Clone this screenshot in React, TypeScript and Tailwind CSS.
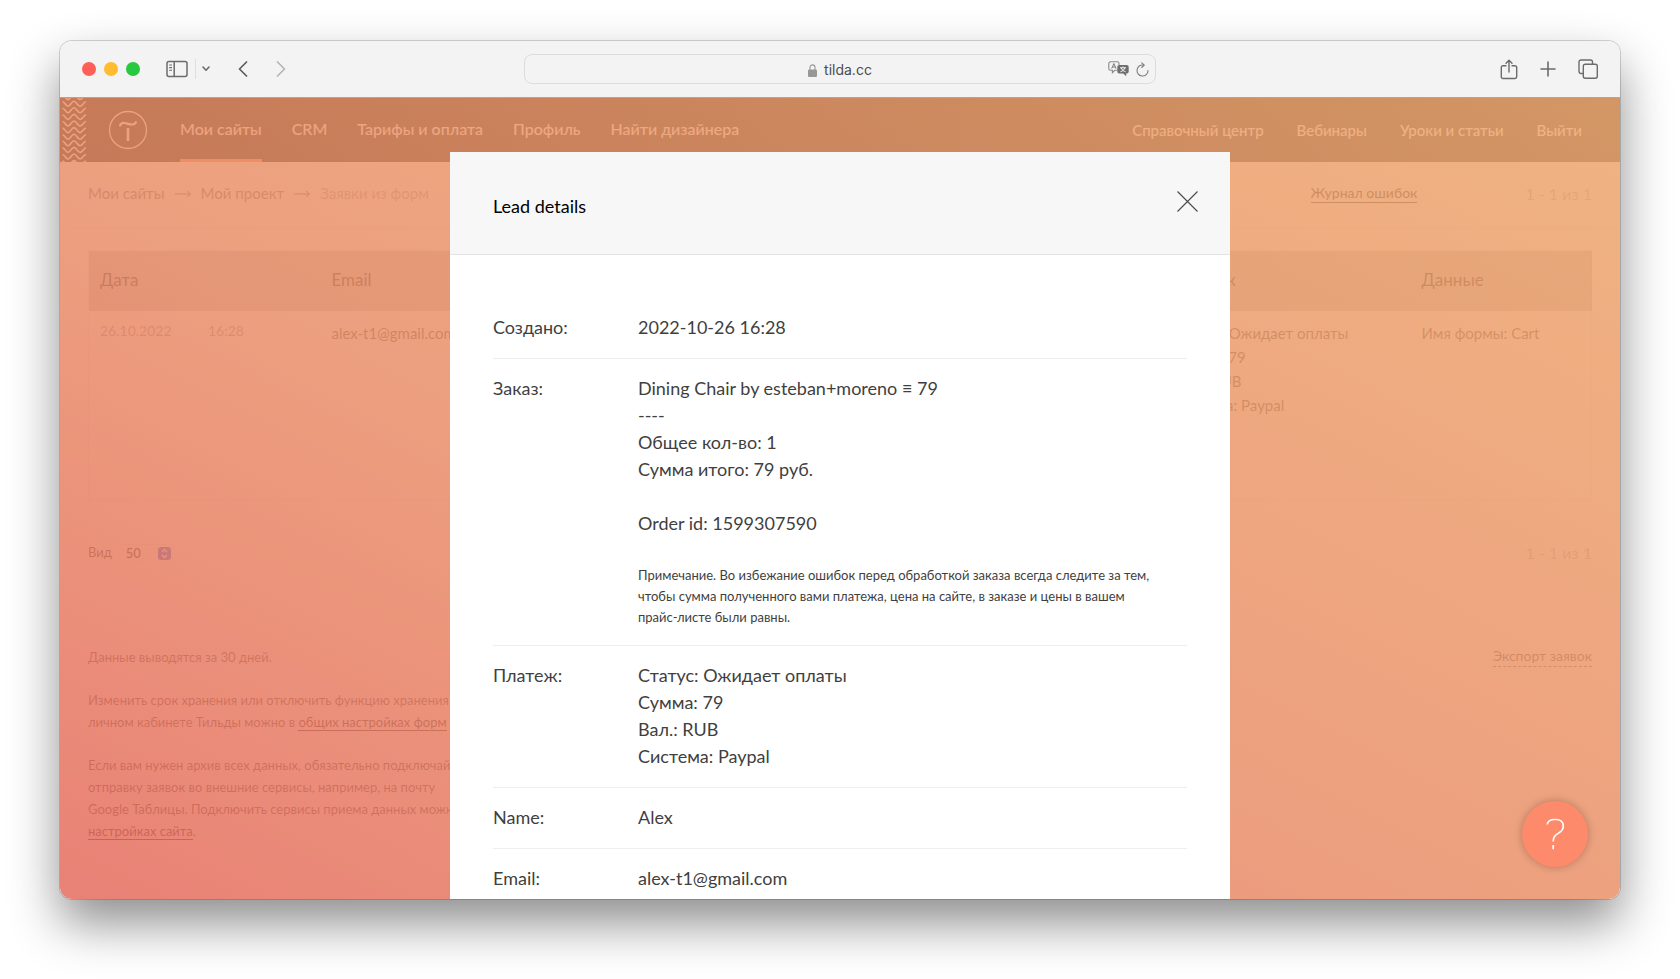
import type { ReactNode } from 'react';

const mainNav = ['Мои сайты', 'CRM', 'Тарифы и оплата', 'Профиль', 'Найти дизайнера'];
const sideNav = ['Справочный центр', 'Вебинары', 'Уроки и статьи', 'Выйти'];

// tops of the wavy lines on the left of the header
const waves = [-3.4, 3.2, 9.8, 16.4, 23, 29.6, 36.2, 42.8, 49.4, 56, 62.6];

function Toolbar() {
  return (
    <div className="grid h-[57px] shrink-0 grid-cols-[1fr_632px_1fr] items-center border-b border-[#b9a399] bg-[#f3f3f3] text-[#6b6b6b]">
      <div className="flex items-center pl-[22px]">
        <div className="flex gap-2">
          <span className="size-[14px] rounded-full bg-[#ff5f57]" />
          <span className="size-[14px] rounded-full bg-[#febc2e]" />
          <span className="size-[14px] rounded-full bg-[#28c840]" />
        </div>
        <button aria-label="Sidebar" className="ml-[26px]">
          <svg width="22" height="18" viewBox="0 0 22 18" fill="none" stroke="currentColor" strokeWidth="1.5">
            <rect x="1" y="1.5" width="20" height="15" rx="2" />
            <path d="M8.2 1.5v15" />
            <path d="M3.2 5h2.8M3.2 7.6h2.8M3.2 10.2h2.8" strokeWidth="1.1" />
          </svg>
        </button>
        <span className="ml-[7px] h-5 w-px bg-[#dedede]" />
        <button aria-label="Tab groups" className="ml-[6px]">
          <svg width="8" height="6" viewBox="0 0 8 6" fill="none" stroke="currentColor" strokeWidth="1.6" strokeLinecap="round" strokeLinejoin="round">
            <path d="M1 1l3 3.2L7 1" />
          </svg>
        </button>
        <button aria-label="Back" className="ml-7">
          <svg width="10" height="16" viewBox="0 0 10 16" fill="none" stroke="#5c5c5c" strokeWidth="1.7" strokeLinecap="round" strokeLinejoin="round">
            <path d="M8.5 1L1.5 8l7 7" />
          </svg>
        </button>
        <button aria-label="Forward" className="ml-7">
          <svg width="10" height="16" viewBox="0 0 10 16" fill="none" stroke="#b5b5b5" strokeWidth="1.7" strokeLinecap="round" strokeLinejoin="round">
            <path d="M1.5 1l7 7-7 7" />
          </svg>
        </button>
      </div>

      <div className="grid h-[30px] grid-cols-[1fr_auto_1fr] items-center rounded-lg border border-[#dcdcdc] bg-[#f3f3f3]">
        <span />
        <div className="flex items-center gap-[7px] pt-[2px] text-sm text-[#4c4c4c] font-['Inter','Liberation_Sans',sans-serif]">
          <svg width="9" height="13" viewBox="0 0 9 13">
            <rect y="5.5" width="9" height="7.5" rx="1.2" fill="#979797" />
            <path d="M2 6V3.4a2.5 2.5 0 0 1 5 0V6" fill="none" stroke="#979797" strokeWidth="1.1" />
          </svg>
          tilda.cc
        </div>
        <div className="flex items-center justify-end gap-[7px] pr-[6px]">
          <button aria-label="Translate">
            <svg width="21" height="16" viewBox="0 0 21 16" fill="none">
              <path d="M9 9.3H6.8L4.4 11.6V9.3H2.4A1.6 1.6 0 0 1 .8 7.7V2.4A1.6 1.6 0 0 1 2.4.8h7A1.6 1.6 0 0 1 11 2.4V4" stroke="#8a8a8a" strokeWidth="1.1" />
              <path d="M3.7 7.6L5.9 2.5l2.1 5.1M4.5 6h2.8" stroke="#7d7d7d" strokeWidth="1" />
              <path d="M11.2 4h7.6A1.9 1.9 0 0 1 20.7 5.9v4.6a1.9 1.9 0 0 1-1.9 1.9h-.6v2.8l-3-2.8h-4a1.9 1.9 0 0 1-1.9-1.9V5.9A1.9 1.9 0 0 1 11.2 4z" fill="#6e6e6e" />
              <path d="M12 6.8h6M15 5.6v1.2M17 6.8c-.6 1.8-2.3 3.2-4.6 4M13.2 6.8c.6 1.8 2 3.2 4.4 4" stroke="#f3f3f3" strokeWidth="1" />
            </svg>
          </button>
          <button aria-label="Reload">
            <svg width="13" height="15" viewBox="0 0 13 15" fill="none" stroke="#7d7d7d" strokeWidth="1.1" strokeLinecap="round" strokeLinejoin="round">
              <path d="M12 8.5A5.5 5.5 0 1 1 8 3.2" />
              <path d="M5.8.8L8.2 3.2 5.8 5.5" />
            </svg>
          </button>
        </div>
      </div>

      <div className="flex items-center justify-end gap-[22px] pr-[22px]">
        <button aria-label="Share">
          <svg width="18" height="21" viewBox="0 0 18 21" fill="none" stroke="currentColor" strokeWidth="1.4" strokeLinecap="round" strokeLinejoin="round">
            <path d="M6 6.7H3A1.7 1.7 0 0 0 1.3 8.4v9.4A1.7 1.7 0 0 0 3 19.5h12a1.7 1.7 0 0 0 1.7-1.7V8.4A1.7 1.7 0 0 0 15 6.7h-3" />
            <path d="M9 13V1.5M6 4.2l3-3 3 3" />
          </svg>
        </button>
        <button aria-label="New tab">
          <svg width="16" height="16" viewBox="0 0 16 16" fill="none" stroke="currentColor" strokeWidth="1.6" strokeLinecap="round">
            <path d="M8 1v14M1 8h14" />
          </svg>
        </button>
        <button aria-label="Tabs">
          <svg width="20" height="20" viewBox="0 0 20 20" fill="none" stroke="currentColor" strokeWidth="1.4">
            <rect x="5.3" y="5.3" width="14" height="14" rx="2" />
            <path d="M5.3 14.5H3a2 2 0 0 1-2-2V3a2 2 0 0 1 2-2h9.5a2 2 0 0 1 2 2v2.3" />
          </svg>
        </button>
      </div>
    </div>
  );
}

function SiteHeader() {
  return (
    <header className="flex h-16 items-center bg-linear-to-r from-[#0c0c0c] to-[#4a4a4a] font-medium text-white">
      <svg width="26" height="64" className="shrink-0" fill="none" stroke="white" strokeWidth="1.6">
        {waves.map((y) => (
          <path key={y} transform={`translate(2 ${y})`} d="M.5.5C3 .5 3.500 5 6 5S9.500 0 12 0s3.500 5 6 5S21.500.5 24 .5" />
        ))}
      </svg>
      <svg width="40" height="40" viewBox="0 0 40 40" className="ml-[22px] shrink-0" fill="none" stroke="white">
        <circle cx="20" cy="20" r="18.5" strokeWidth="1.3" />
        <path d="M12 16.5c.2-2.8 2.3-4 4.7-3.500 2.500.5 4.500 1.700 7.500 1.500 2.200-.1 3.600-1.200 4-3" strokeWidth="2.2" />
        <path d="M20 18v13" strokeWidth="2.6" />
      </svg>
      <nav className="ml-8 flex h-full gap-[30px] text-base">
        {mainNav.map((item, i) => (
          <a
            key={item}
            href="#"
            className={i === 0 ? 'flex items-center border-b-[3px] border-[#ff855d]' : 'flex items-center border-b-[3px] border-transparent'}
          >
            {item}
          </a>
        ))}
      </nav>
      <nav className="ml-auto flex gap-[33px] pr-[38px] text-[15px]">
        {sideNav.map((item) => (
          <a key={item} href="#">{item}</a>
        ))}
      </nav>
    </header>
  );
}

function Arrow() {
  return (
    <svg width="16" height="8" viewBox="0 0 16 8" fill="none" stroke="#666" strokeWidth="1">
      <path d="M0 4h15M12 1l3.500 3L12 7" />
    </svg>
  );
}

function LeadsPage() {
  return (
    <div className="h-full bg-white text-black">
      <SiteHeader />

      <div className="flex h-[66px] items-center border-b border-black/5 px-7 pb-[2px] text-[15px] font-medium text-black/55">
        <a href="#">Мои сайты</a>
        <span className="mx-[10px]"><Arrow /></span>
        <a href="#">Мой проект</a>
        <span className="mx-[10px]"><Arrow /></span>
        <span className="text-black/35">Заявки из форм</span>
        <a href="#" className="mr-[108px] ml-auto border-b border-black/80 text-sm leading-[18px] text-black/80">Журнал ошибок</a>
        <span className="text-base font-normal text-black/30">1 - 1 из 1</span>
      </div>

      <div className="px-7 pt-[22px]">
        <table className="w-full table-fixed border border-black/5 text-left">
          <thead className="bg-black/20 text-[17px] text-black/80">
            <tr className="h-[60px]">
              <th className="w-[232px] pb-[3px] pl-[11px] font-normal">Дата</th>
              <th className="w-[843px] pb-[3px] pl-[11px] font-normal">Email</th>
              <th className="w-[247px] pb-[3px] pl-[11px] font-normal">Платеж</th>
              <th className="pb-[3px] pl-[11px] font-normal">Данные</th>
            </tr>
          </thead>
          <tbody className="text-[15px] leading-6 text-black/70">
            <tr className="h-[190px] align-top">
              <td className="pt-2 pl-[11px] text-sm leading-6 text-black/45">
                <span className="inline-block w-[108px]">26.10.2022</span>16:28
              </td>
              <td className="pt-[10px] pl-[11px]">alex-t1@gmail.com</td>
              <td className="pt-[10px] pl-[11px]">
                Статус: Ожидает оплаты<br />
                Сумма: 79<br />
                Вал.: RUB<br />
                Система: Paypal
              </td>
              <td className="pt-[10px] pl-[11px]">Имя формы: Cart</td>
            </tr>
          </tbody>
        </table>

        <div className="mt-[42px] flex h-5 items-center text-[13px]">
          <label htmlFor="per-page" className="text-black/80">Вид</label>
          <div className="relative ml-[7px] flex items-center">
            <select id="per-page" className="h-[18px] w-[54px] appearance-none rounded border border-black/5 pl-[6px] leading-4 font-semibold text-black/80">
              <option>50</option>
            </select>
            <svg width="13" height="13" viewBox="0 0 13 13" className="pointer-events-none absolute right-[2px]" fill="none" stroke="white" strokeWidth="1.3">
              <rect width="13" height="13" rx="3" fill="#2f5fe0" stroke="none" />
              <path d="M4 5l2.500-2.500L9 5M4 8l2.500 2.500L9 8" />
            </svg>
          </div>
          <span className="ml-auto text-base text-black/30">1 - 1 из 1</span>
        </div>

        <div className="mt-[83px] flex items-start justify-between text-[13px] leading-[22px] text-black/70">
          <div>
            <p>Данные выводятся за 30 дней.</p>
            <p className="mt-[21px]">
              Изменить срок хранения или отключить функцию хранения<br />
              личном кабинете Тильды можно в{' '}
              <a href="#" className="border-b border-black/80 text-black/80">общих настройках форм</a>
            </p>
            <p className="mt-[21px]">
              Если вам нужен архив всех данных, обязательно подключайте<br />
              отправку заявок во внешние сервисы, например, на почту<br />
              Google Таблицы. Подключить сервисы приема данных можно<br />
              <a href="#" className="border-b border-black/80 text-black/80">настройках сайта</a>.
            </p>
          </div>
          <a href="#" className="border-b border-dashed border-black/60 text-sm leading-5">Экспорт заявок</a>
        </div>
      </div>
    </div>
  );
}

function Row({ label, children }: { label: string; children: ReactNode }) {
  return (
    <div className="flex border-b border-[#eeeeee] pt-4 pb-[17px] leading-[27px] last:border-0">
      <dt className="w-[145px] shrink-0">{label}</dt>
      <dd>{children}</dd>
    </div>
  );
}

function LeadModal() {
  return (
    <section role="dialog" aria-label="Lead details" className="h-full w-full max-w-[780px] bg-white">
      <div className="flex h-[103px] items-center justify-between border-b border-[#e4e4e4] bg-[#f7f7f7] pr-8 pl-[43px]">
        <h2 className="pt-[6px] text-lg text-black">Lead details</h2>
        <button aria-label="Close" className="pb-1">
          <svg width="21" height="21" viewBox="0 0 21 21" stroke="#4a4a4a" strokeWidth="1.1">
            <path d="M.5.5l20 20M20.5.5l-20 20" />
          </svg>
        </button>
      </div>
      <dl className="px-[43px] pt-[43px] text-lg text-[#3f3f3f]">
        <Row label="Создано:">2022-10-26 16:28</Row>
        <Row label="Заказ:">
          Dining Chair by esteban+moreno ≡ 79<br />
          ----<br />
          Общее кол-во: 1<br />
          Сумма итого: 79 руб.<br />
          <br />
          Order id: 1599307590
          <p className="mt-7 text-[13px] leading-[21px]">
            Примечание. Во избежание ошибок перед обработкой заказа всегда следите за тем,<br />
            чтобы сумма полученного вами платежа, цена на сайте, в заказе и цены в вашем<br />
            прайс-листе были равны.
          </p>
        </Row>
        <Row label="Платеж:">
          Статус: Ожидает оплаты<br />
          Сумма: 79<br />
          Вал.: RUB<br />
          Система: Paypal
        </Row>
        <Row label="Name:">Alex</Row>
        <Row label="Email:">alex-t1@gmail.com</Row>
      </dl>
    </section>
  );
}

export default function App() {
  return (
    <div className="flex h-screen flex-col overflow-hidden bg-white px-[60px] pt-[41px] pb-20 font-['Lato','Liberation_Sans',sans-serif]">
      <div className="flex min-h-0 flex-1 flex-col rounded-xl shadow-[0_0_0_1px_rgba(0,0,0,0.16),0_24px_50px_rgba(0,0,0,0.45)]">
        <div className="flex min-h-0 flex-1 flex-col overflow-hidden rounded-xl">
          <Toolbar />
          <main className="relative min-h-0 flex-1 overflow-hidden">
            <LeadsPage />

            {/* Overlay */}
            <div className="absolute inset-0 bg-linear-to-tr from-[#e4695c]/84 via-[#e98c66]/84 via-42% to-[#eda56a]/84" />
            <div className="absolute inset-0 flex justify-center overflow-hidden pt-[54px]">
              <LeadModal />
            </div>

            {/* Help */}
            <button aria-label="Help" className="absolute right-8 bottom-8 flex size-[66px] items-center justify-center rounded-full bg-[#fc8a6b] shadow-[0_0_8px_rgba(0,0,0,0.25)]">
              <svg width="20" height="32" viewBox="0 0 20 32" fill="none" stroke="white" strokeWidth="1.7">
                <path d="M2.2 6.5C2.7 3 5.5 1.5 9.8 1.5h1c4.5 0 7.5 2.5 7.5 6.5 0 3-1.5 5-4 6.6C10.5 17 8.2 18.5 8.2 23.5M8.2 27v4.2" />
              </svg>
            </button>
          </main>
        </div>
      </div>
    </div>
  );
}
